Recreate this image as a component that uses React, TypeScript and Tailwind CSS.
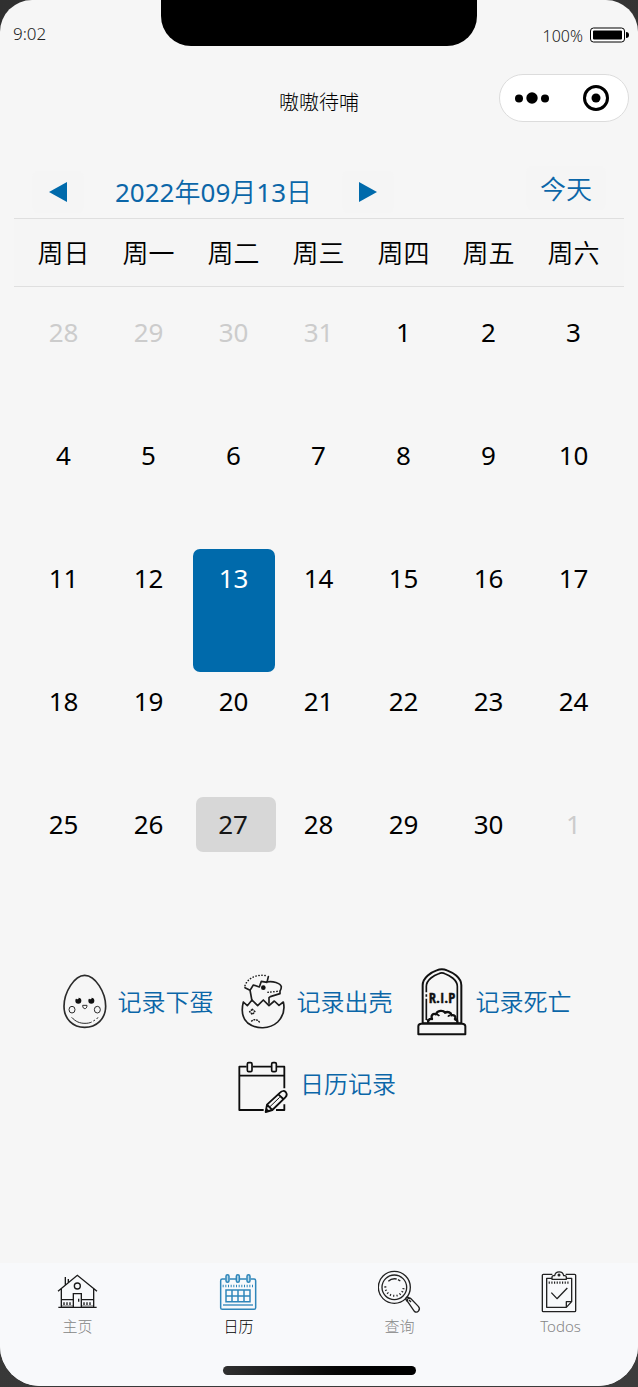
import type { ReactNode } from "react";
import clsx from "clsx";

const weekdays = ["周日", "周一", "周二", "周三", "周四", "周五", "周六"];

type Day = { n: number; outside?: boolean; selected?: boolean; today?: boolean };

function buildDays(): Day[] {
  const days: Day[] = [28, 29, 30, 31].map((n) => ({ n, outside: true }));
  for (let n = 1; n <= 30; n++) {
    days.push({ n, selected: n === 13, today: n === 27 });
  }
  days.push({ n: 1, outside: true });
  return days;
}

const days = buildDays();
const weeks = [0, 1, 2, 3, 4].map((w) => days.slice(w * 7, w * 7 + 7));

function EggIcon() {
  return (
    <svg aria-hidden="true" className="h-[70px] w-[50px] shrink-0" viewBox="26 18 150 210" fill="none" stroke="#2b2b2b">
      <path strokeWidth="5" d="M103 46C72 46 41 97 41 139c0 38 27 63 62 63s63-25 63-63c0-42-31-93-63-93Z" />
      <circle cx="84" cy="122" r="9" fill="#111" stroke="none" />
      <circle cx="123" cy="122" r="9" fill="#111" stroke="none" />
      <circle cx="81" cy="114" r="4" fill="#f6f6f6" stroke="none" />
      <circle cx="120" cy="114" r="4" fill="#f6f6f6" stroke="none" />
      <path strokeWidth="3" d="M97 136h13c0 7-3 10-6.500 10S97 143 97 136Z" />
      <ellipse cx="65" cy="149" rx="9" ry="10" strokeWidth="3" />
      <ellipse cx="141" cy="149" rx="9" ry="10" strokeWidth="3" />
      <path strokeWidth="3" d="M64 172c12 13 24 18 40 18 8 0 14-1 20-4M129 183l5-3M139 177l4-5" />
    </svg>
  );
}

function HatchIcon() {
  return (
    <svg aria-hidden="true" className="h-[70px] w-[50px] shrink-0" viewBox="39 18 150 210" fill="none" stroke="#1d1d1d" strokeLinejoin="round" strokeLinecap="round">
      <path strokeWidth="5" d="M55 126c-6 24-4 48 13 63 26 20 66 19 90-3 17-17 22-38 17-60l-13 10-14-13-16 14-17-17-17 17-17-17-14 17Z" />
      <path strokeWidth="5" d="M81 123l-6-33M60 83l15 8 10-16 18 6 6-17 17 3 4-17M124 66c20-4 42 3 45 14 0 6-2 10-4 13v8l-29 9-4 3v17" />
      <path strokeWidth="4.500" strokeDasharray="1 8" d="M60 77c7-22 37-37 66-29M129 97c10-1 22-2 34-4" />
      <circle cx="115" cy="83" r="7" fill="#111" stroke="none" />
      <path strokeWidth="4.500" strokeDasharray="2 6" d="M82 148l8 7-8 8-8-8ZM80 183c8-6 18-6 26 7" />
    </svg>
  );
}

function TombIcon() {
  return (
    <svg aria-hidden="true" className="h-[70px] w-[50px] shrink-0 overflow-visible" viewBox="50 33 150 210" fill="none" stroke="#111" strokeLinejoin="round">
      <path strokeWidth="6" d="M54 238v-24q0-8 9-8h122q10 0 10 8v24Z" />
      <path strokeWidth="6" d="M67 204V91c0-24 27-40 42-45 9-4 22-4 31 0 16 6 43 21 43 45v113" />
      <path strokeWidth="5" d="M78 112V94c0-20 25-34 37-38 6-3 13-3 19 0 14 5 37 19 37 38v101M78 118v7M78 131v64" />
      <path strokeWidth="7" d="M84 204c-2-8 2-13 11-12-4-11 3-18 12-14 4-13 22-13 27-5 9-5 19 0 19 8 10-2 14 4 11 11 6 1 8 5 7 12" />
      <path strokeWidth="5" d="M79 195h9M163 195h9M110 179c3 0 5 1 7 4M149 181c-3 0-5 2-6 4M68 204h115" />
      <text x="125" y="144" textAnchor="middle" fill="#111" fontSize="44" fontWeight="700" fontFamily="'Open Sans Condensed', 'Liberation Sans Narrow', sans-serif">R.I.P</text>
    </svg>
  );
}

function NoteIcon() {
  return (
    <svg aria-hidden="true" className="h-[60px] w-[50px] shrink-0 overflow-visible" viewBox="29 9 150 180" fill="none" stroke="#0d0d0d" strokeLinejoin="round">
      <path strokeWidth="5.500" d="M67 50H45v130h73M85 50h55M158 50h22v65M180 163v17h-25M45 77h135" />
      <rect x="69" y="38" width="14" height="27" rx="4" strokeWidth="5" />
      <rect x="142" y="38" width="14" height="27" rx="4" strokeWidth="5" />
      <path strokeWidth="5.500" d="M124 186l4-22 40-37c5-5 12-5 16-1 4 5 4 11-1 16l-39 38ZM129 165l14 14M162 133l15 14" />
      <path strokeWidth="3" d="M137 170l29-28" />
      <path fill="#0d0d0d" d="M124 186l2-12 9 9Z" />
    </svg>
  );
}

function HomeIcon() {
  return (
    <svg aria-hidden="true" className="size-11" viewBox="168 45 132 132" fill="none" stroke="#1a1a1a" strokeWidth="4">
      <path d="M174 109l58-48 59 48M184 102v55M281 102v55M175 157h115M196 90V66M205 83V72M184 134h36M244 134h37" />
      <circle cx="232" cy="93" r="9" />
      <path d="M220 157v-41h24v41M236 131v9" />
      <path strokeWidth="8" strokeDasharray="4 5" d="M190 146h27M250 146h27" />
      <path strokeWidth="2" d="M184 153h36M244 153h37" />
    </svg>
  );
}

function CalendarIcon() {
  return (
    <svg aria-hidden="true" className="size-11" viewBox="651 45 132 132" fill="none" stroke="#2f86ba" strokeWidth="4.500">
      <path d="M677 72h-10q-5 0-5 5v81q0 5 5 5h95q5 0 5-5V77q0-5-5-5h-10M689 72h19M720 72h20" />
      <rect x="678" y="59" width="9" height="23" rx="4.500" fill="#b6d9eb" />
      <rect x="709" y="59" width="9" height="23" rx="4.500" fill="#b6d9eb" />
      <rect x="741" y="59" width="9" height="23" rx="4.500" fill="#b6d9eb" />
      <path strokeWidth="7" strokeDasharray="3 5" d="M668 93h94" />
      <path d="M678 105h72v35h-72ZM678 123h72M696 105v35M714 105v35M732 105v35" />
      <path strokeWidth="4" d="M669 150h90" />
    </svg>
  );
}

function SearchIcon() {
  return (
    <svg aria-hidden="true" className="size-11" viewBox="180 45 132 132" fill="none" stroke="#222" strokeWidth="4">
      <circle cx="229" cy="97" r="48" />
      <circle cx="229" cy="97" r="37" />
      <path strokeWidth="6" strokeDasharray="3.500 6.500" d="M202 94c0 38 55 38 55 0" />
      <path d="M211 79c6-6 16-9 25-7M240 74l7 4" />
      <path d="M262 131l6-6 8 6M262 131l6 9M269 140c-4-8 4-14 10-9l22 23c8 9-2 22-12 15ZM273 135l6 6" />
    </svg>
  );
}

function TodoIcon() {
  return (
    <svg aria-hidden="true" className="size-11" viewBox="663 45 132 132" fill="none" stroke="#222" strokeWidth="4" strokeLinejoin="round">
      <path d="M703 58h-27q-3 0-3 3v106q0 3 3 3h94q3 0 3-3V61q0-3-3-3h-27" />
      <path d="M702 70h-16v87h59l16-17V70h-17M745 157v-17h16" />
      <path d="M702 73v-7q0-4 5-4h3c3-15 24-15 27 0h3q5 0 5 4v7Z" />
      <circle cx="723" cy="60" r="2.500" fill="#262626" />
      <path strokeWidth="7" strokeDasharray="3.500 4.500" d="M692 83h64" />
      <path d="M700 113l17 18 31-32" />
    </svg>
  );
}

function RecordLink({ icon, label, wide }: { icon: ReactNode; label: string; wide?: boolean }) {
  return (
    <a href="#record" className={clsx("flex items-center text-2xl font-[350] text-[#0b66a8]", wide ? "gap-4" : "gap-[9px]")}>
      {icon}
      <span className="pt-0.5">{label}</span>
    </a>
  );
}

const dateParts = [
  { value: "2022", unit: "年" },
  { value: "09", unit: "月" },
  { value: "13", unit: "日" },
];

const tabs = [
  { label: "主页", icon: <HomeIcon /> },
  { label: "日历", icon: <CalendarIcon />, active: true },
  { label: "查询", icon: <SearchIcon /> },
  { label: "Todos", icon: <TodoIcon /> },
];

export default function App() {
  return (
    <div className="min-h-screen bg-[linear-gradient(135deg,#303030,#3c3c3c)] pb-px font-['Noto_Sans','Noto_Sans_CJK_SC',sans-serif]">
      <div className="relative flex min-h-[calc(100vh-1px)] flex-col overflow-hidden rounded-t-[32px] rounded-b-[40px] bg-[#f6f6f6]">
        <div className="absolute top-0 left-1/2 h-[46px] w-[316px] -translate-x-1/2 rounded-b-[30px] bg-black" />

        <header>
          <div className="flex h-[68px] items-center justify-between pr-[9px] pl-[13px] font-light text-[#222]">
            <span className="text-[17px]">9:02</span>
            <div className="flex items-center gap-[7px] pt-1">
              <span className="text-base">100%</span>
              <svg aria-hidden="true" className="mb-[3px] h-4 w-[39px]" viewBox="0 0 39 16">
                <rect x="0.500" y="1" width="34" height="14" rx="3" fill="#fff" stroke="#000" />
                <rect x="3" y="3.500" width="29" height="9" rx="1" />
                <path d="M36 5q3 0 3 3t-3 3Z" />
              </svg>
            </div>
          </div>
          <div className="mt-1.5 grid grid-cols-[1fr_auto_1fr] items-center pr-[9px] pl-[9px]">
            <h1 className="col-start-2 pt-2.5 text-xl leading-6 font-light text-black">嗷嗷待哺</h1>
            <div className="flex h-12 w-[130px] justify-self-end rounded-full border border-[#dcdcdc] bg-white">
              <button type="button" aria-label="更多" className="flex flex-1 items-center justify-center">
                <svg aria-hidden="true" className="h-3 w-[34px]" viewBox="0 0 34 12">
                  <circle cx="4" cy="6.500" r="4" />
                  <circle cx="17" cy="6" r="5.700" />
                  <circle cx="30" cy="6.500" r="4" />
                </svg>
              </button>
              <button type="button" aria-label="关闭" className="flex flex-1 items-center justify-center">
                <svg aria-hidden="true" className="size-[26px]" viewBox="0 0 26 26">
                  <circle cx="13" cy="13" r="11.500" fill="none" stroke="#000" strokeWidth="3" />
                  <circle cx="13" cy="13" r="4.500" />
                </svg>
              </button>
            </div>
          </div>
        </header>

        <main className="pt-11">
          <div className="flex h-[52px] items-center pr-8 pl-8 text-[26px] font-[350] text-[#0b66a8]">
            <button type="button" aria-label="上个月" className="flex h-[42px] w-[52px] items-center justify-center rounded-md bg-[#f5f5f5]">
              <svg aria-hidden="true" className="h-5 w-[18px]" viewBox="0 0 18 20" fill="#006aab"><path d="M0 10L18 0v20Z" /></svg>
            </button>
            <span className="ml-[31px]">
              {dateParts.map((part) => (
                <span key={part.unit}>
                  <span className="font-normal">{part.value}</span>
                  {part.unit}
                </span>
              ))}
            </span>
            <button type="button" aria-label="下个月" className="ml-[30px] flex h-[42px] w-[52px] items-center justify-center rounded-md bg-[#f5f5f5]">
              <svg aria-hidden="true" className="h-5 w-[18px]" viewBox="0 0 18 20" fill="#006aab"><path d="M18 10L0 0v20Z" /></svg>
            </button>
            <button type="button" className="ml-auto flex h-11 w-20 items-center justify-center self-start rounded-md bg-[#f5f5f5] pt-0.5">今天</button>
          </div>

          <div className="px-3.5">
            <table className="w-full table-fixed border-collapse text-[26px] text-black">
              <thead className="border-y border-[#dfdfdf] bg-[#f5f5f5]">
                <tr>
                  {weekdays.map((d) => (
                    <th key={d} scope="col" className="h-[68px] p-0 pt-0.5 text-center font-[350] first:w-[92px] first:pl-[7px] last:w-[93px] last:pr-2">{d}</th>
                  ))}
                </tr>
              </thead>
              <tbody className="before:block before:h-4 before:content-['']">
                {weeks.map((week, i) => (
                  <tr key={i}>
                    {week.map((day, j) => (
                      <td key={j} className="h-[123px] p-0 align-top first:pl-[7px] last:pr-2">
                        <button
                          type="button"
                          className={clsx(
                            "flex items-start justify-center rounded-[7px]",
                            day.today
                              ? "mt-0.5 ml-auto h-[55px] w-20 bg-[#d7d7d7] pr-1.5 leading-[54px] text-[#161616]"
                              : "mx-auto h-[123px] w-[82px] leading-[58px]",
                            day.selected && "bg-[#006aab] text-white",
                            day.outside && "text-[#cccccc]",
                          )}
                        >
                          {day.n}
                        </button>
                      </td>
                    ))}
                  </tr>
                ))}
              </tbody>
            </table>
          </div>

          <div className="mt-12 mb-8 flex flex-wrap justify-center gap-x-6 gap-y-[17px] pr-2">
            <RecordLink icon={<EggIcon />} label="记录下蛋" />
            <RecordLink icon={<HatchIcon />} label="记录出壳" />
            <RecordLink icon={<TombIcon />} label="记录死亡" />
            <RecordLink icon={<NoteIcon />} label="日历记录" wide />
          </div>
        </main>

        <footer className="mt-auto flex flex-col items-center bg-[#f8f9fb] pt-[7px] pb-[11px]">
          <nav className="-mx-[3px] grid grid-cols-4 self-stretch">
            {tabs.map((t) => (
              <a
                key={t.label}
                href="#tab"
                aria-current={t.active ? "page" : undefined}
                className={clsx("flex flex-col items-center text-[15px] leading-6 font-light", t.active ? "text-black" : "text-[#858585]")}
              >
                {t.icon}
                <span>{t.label}</span>
              </a>
            ))}
          </nav>
          <div className="mt-7 h-[9px] w-[193px] rounded-full bg-linear-to-r from-[#303030] to-black" />
        </footer>
      </div>
    </div>
  );
}
